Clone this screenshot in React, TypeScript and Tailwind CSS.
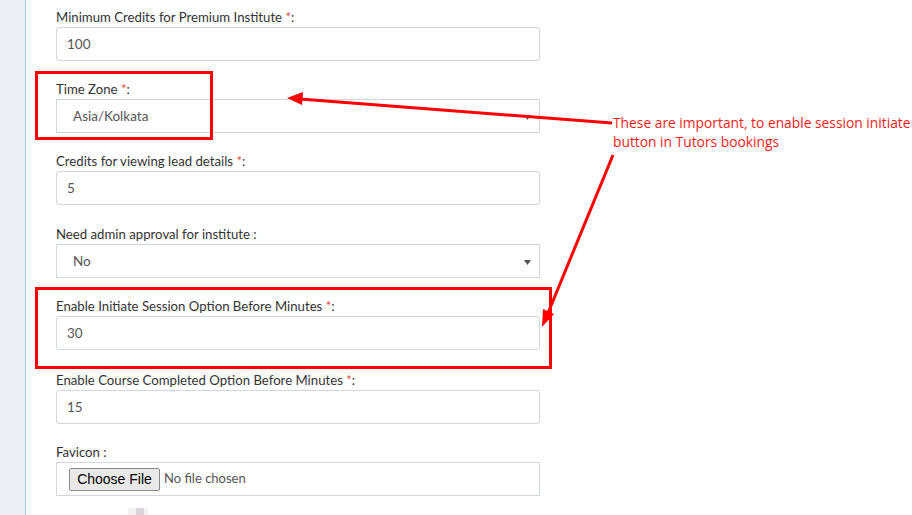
const font = { fontFamily: "Lato, 'Open Sans', sans-serif" };

const Req = () => <span className="text-[#dd4b39]">*</span>;

const Label = ({ children }: { children: React.ReactNode }) => (
  <div className="h-[20px] leading-[20px] text-[13.2px] text-[#333]">{children}</div>
);

const TextBox = ({ value }: { value: string }) => (
  <div className="h-[34px] w-[484px] border border-[#d2d6de] rounded-[3px] px-[10px] flex items-center text-[13.5px] text-[#555]">
    {value}
  </div>
);

const SelectBox = ({ value }: { value: string }) => (
  <div className="h-[34px] w-[484px] border border-[#d2d6de] pl-[16px] pr-[8px] flex items-center justify-between text-[13.5px] text-[#555]">
    <span>{value}</span>
    <svg width="7" height="5" viewBox="0 0 7 5" className="mt-[2px]">
      <path d="M0 0H7L3.5 5Z" fill="#555" />
    </svg>
  </div>
);

export default function App() {
  return (
    <div className="relative w-[912px] h-[515px] overflow-hidden bg-white flex" style={font}>
      <div className="w-[25px] bg-[#ecf0f5] shrink-0" />
      <div className="border-l border-[#9fcbe8] pl-[30px] pt-[7px] flex-1">
        <div className="mb-[18px]">
          <Label>Minimum Credits for Premium Institute <Req />:</Label>
          <TextBox value="100" />
        </div>
        <div className="mb-[18px]">
          <Label>Time Zone <Req />:</Label>
          <SelectBox value="Asia/Kolkata" />
        </div>
        <div className="mb-[19px]">
          <Label>Credits for viewing lead details <Req />:</Label>
          <TextBox value="5" />
        </div>
        <div className="mb-[18px]">
          <Label>Need admin approval for institute :</Label>
          <SelectBox value="No" />
        </div>
        <div className="mb-[20px]">
          <Label>Enable Initiate Session Option Before Minutes <Req />:</Label>
          <TextBox value="30" />
        </div>
        <div className="mb-[18px]">
          <Label>Enable Course Completed Option Before Minutes <Req />:</Label>
          <TextBox value="15" />
        </div>
        <div>
          <Label>Favicon :</Label>
          <div className="h-[34px] w-[484px] border border-[#d2d6de] pl-[12px] flex items-center text-[13px] text-[#555]">
            <span
              className="h-[23px] w-[91px] justify-center border border-[#8a8a8a] rounded-[2px] bg-[#e9e9e9] flex items-center text-[14px] text-black mr-[4px]"
              style={{ fontFamily: "'Liberation Sans', Arial, sans-serif" }}
            >
              Choose File
            </span>
            <span>No file chosen</span>
          </div>
        </div>
        <div className="flex mt-[12px] ml-[72px] gap-0">
          <div className="w-[8px] h-[8px] bg-[#f3f3f3]" />
          <div className="w-[8px] h-[8px] bg-[#d9d4d9]" />
          <div className="w-[4px] h-[8px] bg-[#f3f3f3]" />
        </div>
      </div>

      {/* annotations */}
      <div className="absolute left-[35px] top-[71px] w-[178px] h-[69px] border-[3px] border-[#ff0000]" />
      <div className="absolute left-[35px] top-[287px] w-[517px] h-[82px] border-[3px] border-[#ff0000]" />
      <svg className="absolute left-0 top-0" width="912" height="515">
        <line x1="612" y1="123" x2="300" y2="99" stroke="#ff0000" strokeWidth="3" />
        <path d="M287 98 L303 92 L302 105 Z" fill="#ff0000" />
        <line x1="613" y1="155" x2="548" y2="313" stroke="#ff0000" strokeWidth="3" />
        <path d="M542 327 L543 309 L554 314 Z" fill="#ff0000" />
      </svg>
      <div
        className="absolute left-[613px] top-[113px] text-[13.8px] leading-[19px] text-[#ff1a1a] whitespace-nowrap"
        style={{ fontFamily: "'Open Sans', sans-serif" }}
      >
        These are important, to enable session initiate
        <br />
        button in Tutors bookings
      </div>
    </div>
  );
}
